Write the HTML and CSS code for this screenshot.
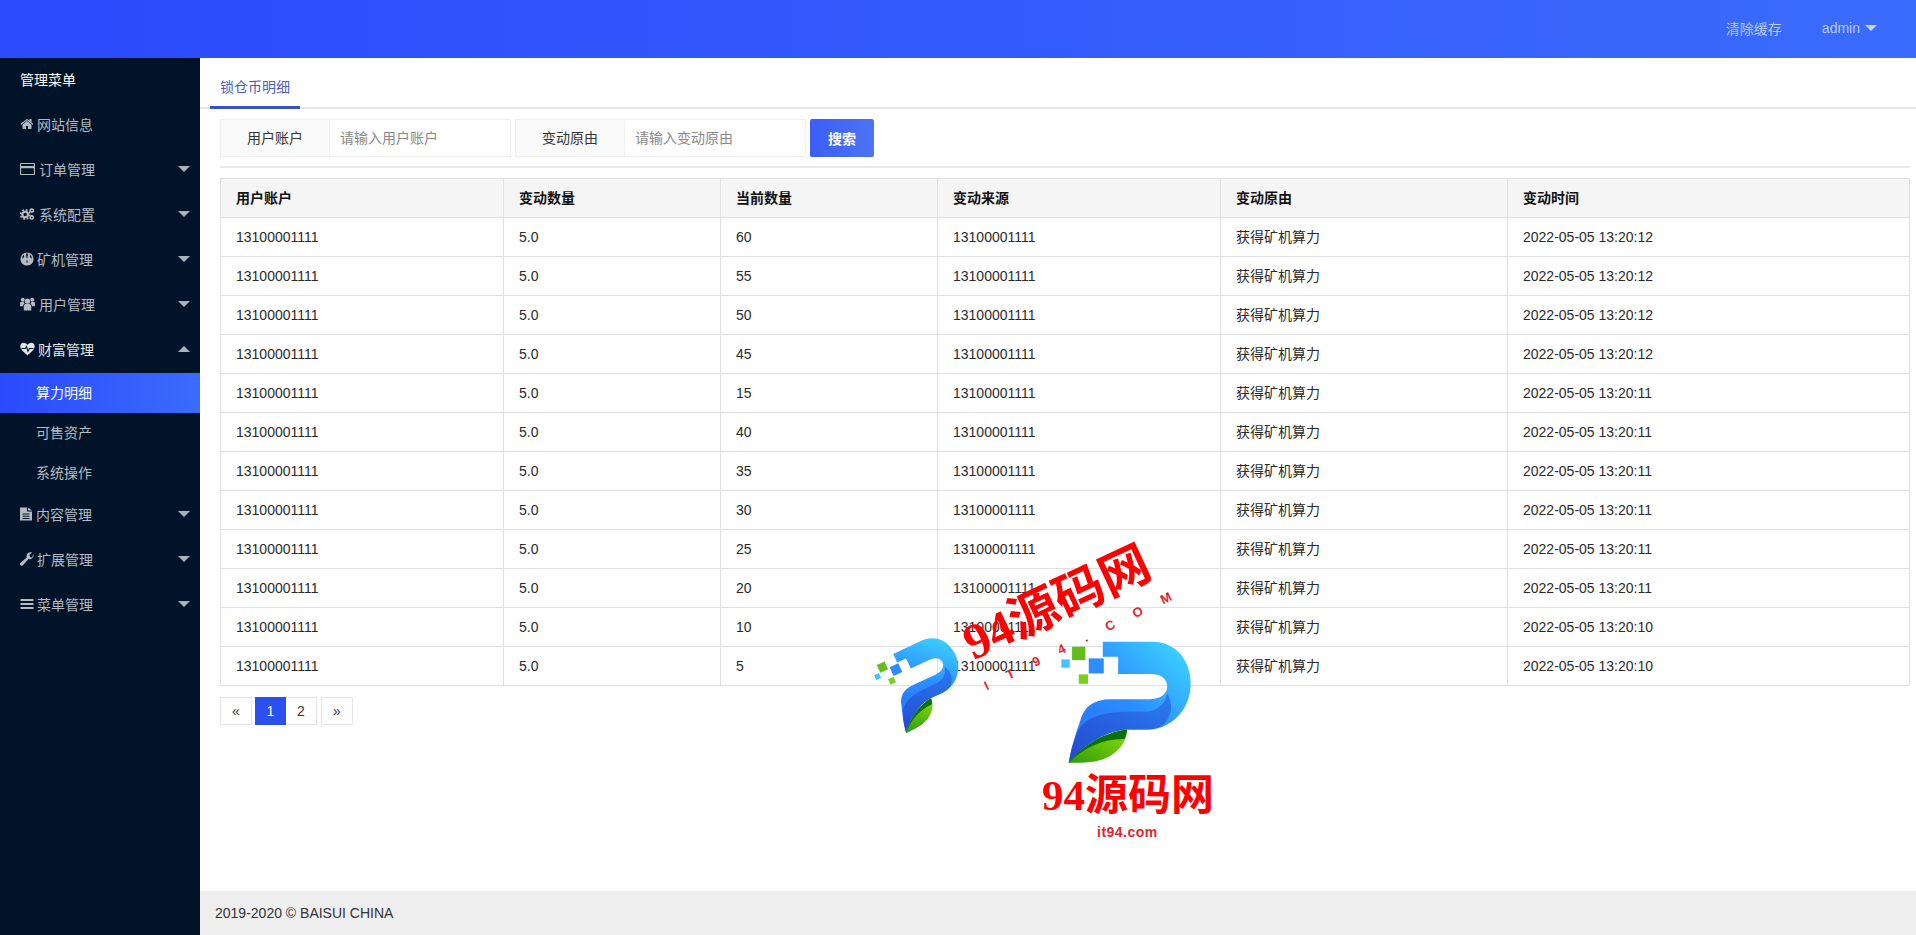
FILE: index.html
```html
<!DOCTYPE html>
<html lang="zh-CN">
<head>
<meta charset="utf-8">
<title>锁仓币明细</title>
<link rel="stylesheet" href="styles.css">
</head>
<body>
<header class="topbar">
  <a class="top-link">清除缓存</a>
  <a class="top-link top-user">admin<span class="caret caret-top"></span></a>
</header>
<div class="shell">
  <aside class="sidebar">
    <div class="menu-title">管理菜单</div>
    <nav>
      <a class="item"><svg class="ico" viewBox="0 0 1792 1792"><path d="M1472 992v480q0 26-19 45t-45 19h-384v-384h-256v384h-384q-26 0-45-19t-19-45v-480q0-1 .5-3t.5-3l575-474 575 474q1 2 1 6zm223-69l-62 74q-8 9-21 11h-3q-13 0-21-7l-692-577-692 577q-12 8-24 7-13-2-21-11l-62-74q-8-10-7-23.5t11-21.5l719-599q32-26 76-26t76 26l244 204v-195q0-14 9-23t23-9h192q14 0 23 9t9 23v408l219 182q10 8 11 21.5t-7 23.5z"/></svg>网站信息</a>
      <a class="item"><svg class="ico ico-wide" viewBox="0 0 16 14"><path fill-rule="evenodd" d="M1.300 .5h13.400c.7 0 1.300.6 1.300 1.300v10.400c0 .7-.6 1.300-1.300 1.300H1.300C.6 13.500 0 12.900 0 12.200V1.800C0 1.100.6 .5 1.300 .5zm-.1 1.200v2.100h13.600V1.700H1.200zm0 4.500v6.100h13.600V6.200H1.200z"/></svg>订单管理<span class="caret"></span></a>
      <a class="item"><svg class="ico ico-wide" viewBox="0 0 16 14"><circle cx="5.500" cy="7.500" r="3" fill="none" stroke="currentColor" stroke-width="2.200"/><circle cx="5.500" cy="7.500" r="4.900" fill="none" stroke="currentColor" stroke-width="1.800" stroke-dasharray="2 1.850"/><circle cx="12.500" cy="3.300" r="1.700" fill="none" stroke="currentColor" stroke-width="1.700"/><circle cx="12.500" cy="10.700" r="1.700" fill="none" stroke="currentColor" stroke-width="1.700"/></svg>系统配置<span class="caret"></span></a>
      <a class="item"><svg class="ico ico-rebel" viewBox="0 0 16 16"><circle cx="8" cy="8" r="7.500"/><path fill="#011329" d="M8 .3 6.900 3.200 7.500 6.500 8 7.500 8.500 6.500 9.100 3.200zM4.300 2.800C2.800 4.200 2.300 6.200 2.900 8 3.300 6.800 4.100 6 5 5.700 4.500 4.800 4.200 3.800 4.300 2.800zM11.700 2.800C13.200 4.200 13.700 6.200 13.100 8 12.700 6.800 11.900 6 11 5.700 11.500 4.800 11.800 3.800 11.700 2.800zM7.500 9.500H8.500V12.300H7.500z"/></svg>矿机管理<span class="caret"></span></a>
      <a class="item"><svg class="ico ico-wide" viewBox="0 0 16 14"><circle cx="8" cy="4" r="2.800"/><circle cx="3" cy="2.500" r="2.100"/><circle cx="13" cy="2.500" r="2.100"/><path d="M4 13.800V9.500C4 8 5 7 6 7H10C11 7 12 8 12 9.500V13.800zM0 9.500V6.200C0 5.300.6 4.800 1.400 4.800H4C4.200 5.700 4.500 6.200 4.900 6.600 3.700 7 3.200 8.200 3.200 9.500zM16 9.500V6.200C16 5.300 15.400 4.800 14.600 4.800H12C11.800 5.700 11.500 6.200 11.100 6.600 12.300 7 12.800 8.200 12.800 9.500z"/></svg>用户管理<span class="caret"></span></a>
      <a class="item item-open"><svg class="ico ico-wide ico-tight" viewBox="0 0 16 14"><path d="M8 13.800C6 12 1 8.500.4 5.200-.1 2.500 1.600.4 4 .4 5.600.4 7.200 1.400 8 2.800 8.800 1.400 10.400.4 12 .4 14.400.4 16.100 2.500 15.600 5.200 15 8.500 10 12 8 13.800z"/><path d="M1.500 6.500H5.800L6.900 4.300 8.500 9.500 10 6.500H14.500" fill="none" stroke="#011329" stroke-width="1.100"/></svg>财富管理<span class="caret caret-up"></span></a>
      <a class="sub sub-on">算力明细</a>
      <a class="sub">可售资产</a>
      <a class="sub sub-last">系统操作</a>
      <a class="item"><svg class="ico ico-narrow" viewBox="0 0 12 14"><path fill-rule="evenodd" d="M0 .5H7V4.500H12V13.500H0zM8 .5L12 3.500H8zM2.500 6.500V7.500H9.500V6.500zM2.500 8.800V9.800H9.500V8.800zM2.500 11V12H9.500V11z"/></svg>内容管理<span class="caret"></span></a>
      <a class="item"><svg class="ico ico-tight" viewBox="0 0 14 14"><path d="M13.600 3.300C13.600 5.500 11.800 7.300 9.600 7.300 9.200 7.300 8.800 7.200 8.400 7.100L3 13.200C2.200 14 1 13.900.4 13.300-.2 12.600-.2 11.500.6 10.800L6.700 5.400C6.500 5 6.500 4.500 6.500 4.100 6.500 1.900 8.300.2 10.500.2 11 .2 11.500.3 12 .5L9.500 3 10 5 12 5.500 13.400 2.100C13.500 2.500 13.600 2.900 13.600 3.300z"/></svg>扩展管理<span class="caret"></span></a>
      <a class="item"><svg class="ico ico-tight" viewBox="0 0 13 14"><path d="M0 2H13V4H0zM0 6H13V8H0zM0 10H13V12H0z"/></svg>菜单管理<span class="caret"></span></a>
    </nav>
  </aside>
  <div class="main">
    <main class="content">
      <div class="tabs"><span class="tab">锁仓币明细</span></div>
      <div class="panel">
        <form class="search">
          <label class="field"><span class="field-label">用户账户</span><input class="field-input" placeholder="请输入用户账户"></label>
          <label class="field"><span class="field-label">变动原由</span><input class="field-input" placeholder="请输入变动原由"></label>
          <button class="btn" type="button">搜索</button>
        </form>
        <table class="grid">
          <colgroup><col class="c1"><col class="c2"><col class="c3"><col class="c4"><col class="c5"><col></colgroup>
          <thead><tr><th>用户账户</th><th>变动数量</th><th>当前数量</th><th>变动来源</th><th>变动原由</th><th>变动时间</th></tr></thead>
          <tbody>
            <tr><td>13100001111</td><td>5.0</td><td>60</td><td>13100001111</td><td>获得矿机算力</td><td>2022-05-05 13:20:12</td></tr>
            <tr><td>13100001111</td><td>5.0</td><td>55</td><td>13100001111</td><td>获得矿机算力</td><td>2022-05-05 13:20:12</td></tr>
            <tr><td>13100001111</td><td>5.0</td><td>50</td><td>13100001111</td><td>获得矿机算力</td><td>2022-05-05 13:20:12</td></tr>
            <tr><td>13100001111</td><td>5.0</td><td>45</td><td>13100001111</td><td>获得矿机算力</td><td>2022-05-05 13:20:12</td></tr>
            <tr><td>13100001111</td><td>5.0</td><td>15</td><td>13100001111</td><td>获得矿机算力</td><td>2022-05-05 13:20:11</td></tr>
            <tr><td>13100001111</td><td>5.0</td><td>40</td><td>13100001111</td><td>获得矿机算力</td><td>2022-05-05 13:20:11</td></tr>
            <tr><td>13100001111</td><td>5.0</td><td>35</td><td>13100001111</td><td>获得矿机算力</td><td>2022-05-05 13:20:11</td></tr>
            <tr><td>13100001111</td><td>5.0</td><td>30</td><td>13100001111</td><td>获得矿机算力</td><td>2022-05-05 13:20:11</td></tr>
            <tr><td>13100001111</td><td>5.0</td><td>25</td><td>13100001111</td><td>获得矿机算力</td><td>2022-05-05 13:20:11</td></tr>
            <tr><td>13100001111</td><td>5.0</td><td>20</td><td>13100001111</td><td>获得矿机算力</td><td>2022-05-05 13:20:11</td></tr>
            <tr><td>13100001111</td><td>5.0</td><td>10</td><td>13100001111</td><td>获得矿机算力</td><td>2022-05-05 13:20:10</td></tr>
            <tr><td>13100001111</td><td>5.0</td><td>5</td><td>13100001111</td><td>获得矿机算力</td><td>2022-05-05 13:20:10</td></tr>
          </tbody>
        </table>
        <div class="pager">
          <a class="page">«</a>
          <div class="page-group"><a class="page page-on">1</a><a class="page">2</a></div>
          <a class="page">»</a>
        </div>
      </div>
    </main>
    <footer class="footer">2019-2020 © BAISUI CHINA</footer>
  </div>
</div>

<div class="wm wm-logo-big">
  <svg viewBox="620 330 410 380" class="wm-svg">
    <defs>
      <linearGradient id="pg" x1="0" y1="1" x2="1" y2="0"><stop offset="0" stop-color="#2a6cf0"/><stop offset=".5" stop-color="#2b8dff"/><stop offset="1" stop-color="#3fdcff"/></linearGradient>
      <linearGradient id="pd" x1="0" y1="1" x2="1" y2="0"><stop offset="0" stop-color="#2448d0"/><stop offset="1" stop-color="#2a7cf0"/></linearGradient>
      <linearGradient id="lg" x1="0" y1="1" x2="1" y2="0"><stop offset="0" stop-color="#2f9a10"/><stop offset="1" stop-color="#8be000"/></linearGradient>
    </defs>
    <path fill="url(#pg)" d="M757 335H905C975 335 1020 390 1020 460 1020 540 960 598 890 598H830C780 598 700 640 655 698 665 640 680 600 690 570 700 530 730 507 780 507H900C930 507 950 490 950 470 950 445 930 432 900 432H803V380H757Z"/>
    <path fill="url(#pd)" d="M655 698C665 640 678 610 690 590 720 555 770 545 830 545H880C920 545 945 520 950 490 975 530 960 598 890 598H830C780 598 700 640 655 698Z"/>
    <path fill="url(#lg)" d="M655 698C700 640 770 605 830 598 830 640 790 690 720 695 700 697 675 697 655 698Z"/>
    <path fill="#0a6e12" d="M655 698C700 640 770 605 830 598 829 610 826 618 822 626 760 625 700 650 655 698Z"/>
    <rect x="665" y="350" width="40" height="40" fill="#62bd1c"/>
    <rect x="715" y="385" width="45" height="45" fill="#2f8cff"/>
    <rect x="633" y="388" width="25" height="25" fill="#3cc8ff"/>
    <rect x="685" y="433" width="28" height="28" fill="#7bd01e"/>
  </svg>
</div>
<div class="wm wm-logo-small">
  <svg viewBox="620 330 410 380" class="wm-svg">
    <path fill="url(#pg)" d="M757 335H905C975 335 1020 390 1020 460 1020 540 960 598 890 598H830C780 598 700 640 655 698 665 640 680 600 690 570 700 530 730 507 780 507H900C930 507 950 490 950 470 950 445 930 432 900 432H803V380H757Z"/>
    <path fill="url(#pd)" d="M655 698C665 640 678 610 690 590 720 555 770 545 830 545H880C920 545 945 520 950 490 975 530 960 598 890 598H830C780 598 700 640 655 698Z"/>
    <path fill="url(#lg)" d="M655 698C700 640 770 605 830 598 830 640 790 690 720 695 700 697 675 697 655 698Z"/>
    <path fill="#0a6e12" d="M655 698C700 640 770 605 830 598 829 610 826 618 822 626 760 625 700 650 655 698Z"/>
    <rect x="665" y="350" width="40" height="40" fill="#62bd1c"/>
    <rect x="715" y="385" width="45" height="45" fill="#2f8cff"/>
    <rect x="633" y="388" width="25" height="25" fill="#3cc8ff"/>
    <rect x="685" y="433" width="28" height="28" fill="#7bd01e"/>
  </svg>
</div>
<div class="wm wm-text-big">94源码网</div>
<div class="wm wm-url">it94.com</div>
<div class="wm wm-text-rot">94源码网</div>
<div class="wm wm-url-rot">IT94.COM</div>
</body>
</html>
```

FILE: styles.css
```css
* { box-sizing: border-box; }
html, body { margin: 0; height: 100%; }
body {
  height: 935px;
  overflow: hidden;
  display: flex;
  flex-direction: column;
  font-family: "Liberation Sans", "Noto Sans CJK SC", sans-serif;
  font-size: 14px;
  color: #333;
  background: #fff;
}
.topbar {
  height: 58px;
  flex: none;
  display: flex;
  align-items: center;
  justify-content: flex-end;
  padding: 0 39px 3px 0;
  background: linear-gradient(90deg, #2b4afc, #3b6bfd);
}
.top-link { color: #b9c9f7; font-size: 14px; }
.top-user { margin-left: 40px; display: flex; align-items: center; }
.caret {
  width: 0; height: 0;
  border-left: 6px solid transparent;
  border-right: 6px solid transparent;
  border-top: 6px solid #a9b3bd;
  margin-left: auto;
}
.caret-top { border-top-color: #c5d2f8; margin-left: 5px; }
.caret-up { border-top: 0; border-bottom: 6px solid #a9b3bd; }
.shell { flex: 1; display: flex; min-height: 0; }
.sidebar { width: 200px; flex: none; background: #011329; color: #b5bbc1; }
.menu-title { height: 43px; padding: 0 20px; line-height: 44px; color: #fff; }
.item {
  display: flex;
  align-items: center;
  height: 45px;
  padding: 0 10px 0 20px;
  color: #b5bbc1;
}
.item-open { color: #e3e5e8; margin-bottom: 2px; }
.ico { width: 14px; height: 14px; margin-right: 3px; fill: currentColor; color: #b5bbc1; flex: none; }
.item-open .ico { color: #e3e5e8; }
.ico-wide { width: 15px; margin-right: 4px; }
.ico-rebel { margin-right: 3px; }
.ico-tight { margin-right: 3px; }
.ico-narrow { width: 12px; margin-right: 4px; }
.sub { display: block; height: 40px; line-height: 40px; padding-left: 36px; color: #b5bbc1; }
.sub-last { height: 38px; }
.sub-on { color: #fff; background: linear-gradient(90deg, #2b4afc, #3b6bfd); }
.main { flex: 1; min-width: 0; display: flex; flex-direction: column; }
.content { flex: 1; min-height: 0; }
.tabs { height: 51px; padding-left: 10px; border-bottom: 2px solid #e6e6e6; display: flex; align-items: flex-end; }
.tab {
  width: 90px;
  height: 37px;
  margin-bottom: -2px;
  padding-left: 10px;
  line-height: 30px;
  color: #4a5cc0;
  border-bottom: 3px solid #3a4fc0;
}
.panel { padding: 10px 6px 0 20px; }
.search { position: relative; display: flex; gap: 4px; height: 38px; margin-bottom: 21px; }
.search::after { content: ""; position: absolute; left: 0; right: 0; bottom: -11px; height: 2px; background: #e9e9e9; }
.field { display: flex; width: 291px; border: 1px solid #eee; }
.field-label { width: 109px; flex: none; text-align: center; line-height: 36px; background: #fafafa; border-right: 1px solid #eee; color: #333; }
.field-input { flex: 1; min-width: 0; border: 0; outline: 0; padding: 0 10px; font: inherit; background: #fff; }
.field-input::placeholder { color: #888; }
.btn { width: 64px; border: 0; border-radius: 2px; color: #fff; font: inherit; font-weight: 700; background: linear-gradient(90deg, #3a5ef5, #4c74f5); }
.grid {
  width: 100%;
  table-layout: fixed;
  border-collapse: collapse;
  border: 1px solid #ddd;
  font-size: 14px;
  line-height: 20px;
  color: #2a2a2a;
}
.grid th, .grid td { height: 39px; padding: 0 15px; border: 1px solid #e0e0e0; text-align: left; font-weight: 400; }
.grid th { font-weight: 700; color: #111; background: #f5f5f5; }
.c1 { width: 283px; }
.c2 { width: 217px; }
.c3 { width: 217px; }
.c4 { width: 283px; }
.c5 { width: 287px; }
.pager { display: flex; margin-top: 11px; gap: 3px; }
.page-group { display: flex; margin-right: 1px; }
.page {
  display: block;
  width: 32px;
  height: 28px;
  line-height: 26px;
  text-align: center;
  border: 1px solid #e6e6e6;
  color: #333;
}
.page-group .page { width: 31px; }
.page-group .page + .page { border-left: 0; }
.page-on { background: #2a50f0; border-color: #2a50f0; color: #fff; }
.footer { height: 44px; flex: none; padding-left: 15px; line-height: 44px; background: #eee; color: #333; font-size: 14px; }

.wm { position: absolute; pointer-events: none; }
.wm-svg { display: block; width: 100%; height: 100%; }
.wm-logo-big { left: 1057px; top: 640px; width: 137px; height: 127px; }
.wm-logo-small { left: 879px; top: 643px; width: 88px; height: 81px; transform: rotate(-25deg); }
.wm-text-big { left: 1042px; top: 770px; color: #f00; font: 700 43px/52px "Liberation Serif", "Noto Sans CJK SC", serif; white-space: nowrap; }
.wm-url { left: 1097px; top: 823px; color: #e0262a; font: 700 14px/18px "Liberation Sans", sans-serif; letter-spacing: .5px; }
.wm-text-rot { left: 966px; top: 618px; color: #f00; font: 700 50px/54px "Liberation Serif", "Noto Sans CJK SC", serif; white-space: nowrap; transform: rotate(-25deg); transform-origin: left center; }
.wm-url-rot { left: 985px; top: 680px; color: #e0262a; font: 700 13px/14px "Liberation Sans", sans-serif; letter-spacing: 21px; white-space: nowrap; transform: rotate(-26deg); transform-origin: left center; }
```
